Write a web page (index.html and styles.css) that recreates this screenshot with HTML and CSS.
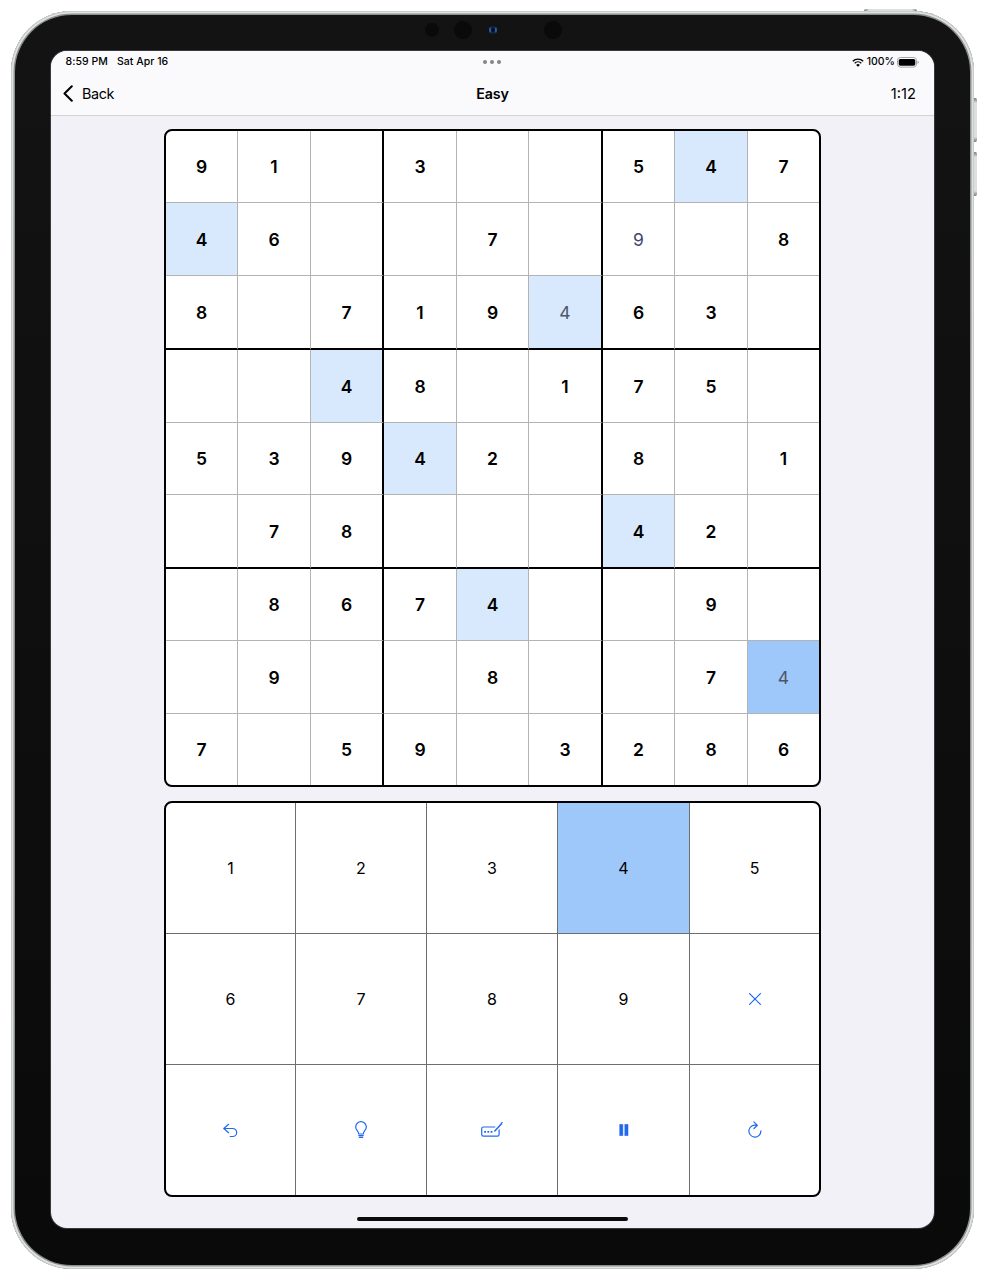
FILE: index.html
```html
<!DOCTYPE html>
<html lang="en">
<head>
<meta charset="utf-8">
<title>Sudoku</title>
<link rel="stylesheet" href="styles.css">
</head>
<body>
<div class="tablet">
  <span class="hw power"></span>
  <span class="hw vol-up"></span>
  <span class="hw vol-down"></span>
  <span class="lens sensor-a"></span>
  <span class="lens sensor-b"></span>
  <span class="camera"></span>
  <span class="lens sensor-c"></span>
  <div class="screen">
    <header class="top">
      <div class="status">
        <div class="status-left"><span>8:59 PM</span><span>Sat Apr 16</span></div>
        <div class="dots"><i></i><i></i><i></i></div>
        <div class="status-right">
          <svg class="wifi" viewBox="0 0 12 9"><path d="M.8 3.3a7.4 7.4 0 0 1 10.4 0M2.7 5.2a4.7 4.7 0 0 1 6.6 0" fill="none" stroke="#000" stroke-width="1.4"/><path d="M6 8.8 4.1 6.9a2.7 2.7 0 0 1 3.8 0z"/></svg>
          <span class="pct">100%</span>
          <svg class="battery" viewBox="0 0 22 11"><rect x=".5" y=".5" width="19" height="9.6" rx="3" fill="#fff" stroke="#a3a3a5"/><rect x="1.7" y="1.9" width="16.6" height="6.8" rx="1.6"/><path d="M20.5 3.8q1.2.4 1.2 1.5t-1.2 1.5z" fill="#a3a3a5"/></svg>
        </div>
      </div>
      <nav class="nav">
        <div class="back"><svg viewBox="0 0 10 17"><path d="M8.8 1.2 1.5 8.5l7.3 7.3" fill="none" stroke="#000" stroke-width="2" stroke-linecap="round" stroke-linejoin="round"/></svg>Back</div>
        <h1>Easy</h1>
        <div class="timer">1:12</div>
      </nav>
    </header>
    <main class="game">
      <div class="board">
        <b>9</b><b>1</b><b></b><b>3</b><b></b><b></b><b>5</b><b class="same">4</b><b>7</b>
        <b class="same">4</b><b>6</b><b></b><b></b><b>7</b><b></b><b class="entry note">9</b><b></b><b>8</b>
        <b>8</b><b></b><b>7</b><b>1</b><b>9</b><b class="same entry">4</b><b>6</b><b>3</b><b></b>
        <b></b><b></b><b class="same">4</b><b>8</b><b></b><b>1</b><b>7</b><b>5</b><b></b>
        <b>5</b><b>3</b><b>9</b><b class="same">4</b><b>2</b><b></b><b>8</b><b></b><b>1</b>
        <b></b><b>7</b><b>8</b><b></b><b></b><b></b><b class="same">4</b><b>2</b><b></b>
        <b></b><b>8</b><b>6</b><b>7</b><b class="same">4</b><b></b><b></b><b>9</b><b></b>
        <b></b><b>9</b><b></b><b></b><b>8</b><b></b><b></b><b>7</b><b class="selected entry">4</b>
        <b>7</b><b></b><b>5</b><b>9</b><b></b><b>3</b><b>2</b><b>8</b><b>6</b>
      </div>
      <div class="keypad">
        <div>1</div><div>2</div><div>3</div><div class="selected">4</div><div>5</div>
        <div>6</div><div>7</div><div>8</div><div>9</div>
        <div><svg width="12" height="12" viewBox="0 0 12 12"><path d="M.6.6l10.8 10.8M11.4.6.6 11.4"/></svg></div>
        <div><svg width="15" height="15" viewBox="0 0 15 15"><path d="M5.6 1.3.8 5.5l4.8 4.2M1 5.5h8.7a4 4 0 0 1 0 8H7.2"/></svg></div>
        <div><svg class="bulb" width="12" height="18" viewBox="0 0 12 18"><path d="M3.7 13C3.7 10 .7 9.3.7 5.9A5.3 5.2 0 0 1 11.3 5.9C11.3 9.3 8.3 10 8.3 13z"/><path d="M3.8 14.6h4.4M4.4 16.4h3.2" stroke-width="1.3"/></svg></div>
        <div><svg class="pad" width="22" height="16" viewBox="0 0 22 16"><path d="M13.8 5H2.3Q.7 5 .7 6.6v6q0 1.600 1.600 1.600h14.200q1.600 0 1.600-1.600V7.800"/><path d="m13.800 9 6.700-7.200" stroke-width="1.500"/><path d="m20.300 1.300.9-.7"/><path d="M3.200 9.800h1.800M6.400 9.800h1.800M9.600 9.800h1.800" stroke-width="1.800" stroke-linecap="butt"/></svg></div>
        <div><svg width="10" height="12" viewBox="0 0 10 12"><path d="M.5.2h3.400v11.600H.5zM5.700.2h3.400v11.600H5.700z" fill="#2069ee" stroke="#2069ee" stroke-width=".3"/></svg></div>
        <div><svg class="reload" width="14" height="17" viewBox="0 0 14 17"><path d="M12.900 9.800A6 6 0 1 1 8.600 4.300M5.900.8 9.400 4.300 6 7.500"/></svg></div>
      </div>
    </main>
    <div class="home"></div>
  </div>
</div>
</body>
</html>
```
FILE: styles.css
```css
* { box-sizing: border-box; }
body {
  margin: 0;
  padding: 11px 11px 0;
  height: 1280px;
  overflow: hidden;
  background: #fff;
  color: #000;
  font-family: Inter, "Liberation Sans", sans-serif;
}
.tablet {
  position: relative;
  width: 963px;
  height: 1258px;
  padding: 40px;
  border-radius: 61px;
  background: linear-gradient(#131313, #0a0a0a);
  box-shadow: inset 0 0 0 1px #c9cccb, inset 0 0 0 2.5px #dfe2e1, inset 0 0 0 4px #8b8f8d;
}
.hw { position: absolute; background: linear-gradient(90deg, #777 0, #dcdfdd 5px, #dcdfdd calc(100% - 5px), #777); }
.power { left: 853px; top: -2px; width: 53px; height: 2px; border-radius: 2px 2px 0 0; }
.vol-up, .vol-down { left: 963px; width: 3px; height: 44px; border-radius: 0 2px 2px 0; background: linear-gradient(#777 0, #dcdfdd 5px, #dcdfdd 39px, #777); }
.vol-up { top: 87px; }
.vol-down { top: 141px; }
.lens { position: absolute; border-radius: 50%; background: #0a0a0a; }
.sensor-a { left: 414px; top: 12px; width: 14px; height: 14px; }
.sensor-b { left: 443px; top: 10px; width: 18px; height: 18px; }
.sensor-c { left: 533px; top: 10px; width: 18px; height: 18px; }
.camera {
  position: absolute; left: 478px; top: 15px; width: 8px; height: 8px;
  border: 2px solid #17233c; border-left-color: #285aa3; border-right-color: #285aa3;
  border-radius: 50%; background: #080d1c;
}
.screen {
  display: flex;
  flex-direction: column;
  align-items: center;
  height: 1177px;
  border-radius: 16px;
  background: #f2f1f7;
  overflow: hidden;
  box-shadow: 0 0 0 1px #3a3a3c;
}
.top { width: 100%; height: 65px; background: #fafafd; border-bottom: 1px solid #d2d1d6; }
.status {
  display: grid;
  grid-template-columns: 1fr auto 1fr;
  align-items: center;
  height: 22px;
  padding: 0 15px 0 14.5px;
  font-size: 10.5px;
  line-height: 22px;
  font-weight: 450;
  letter-spacing: .05px;
}
.status-left { display: flex; gap: 9px; }
.dots { display: flex; gap: 3px; }
.dots i { width: 4px; height: 4px; border-radius: 50%; background: #858587; }
.status-right { display: flex; align-items: center; justify-content: flex-end; }
.wifi { width: 12px; height: 9px; margin-right: 3px; }
.pct { margin-right: 2px; letter-spacing: 0; }
.battery { width: 22px; height: 11px; }
.nav {
  display: grid;
  grid-template-columns: 1fr auto 1fr;
  align-items: center;
  height: 41px;
  padding: 0 18px 0 12px;
  font-size: 14.7px;
}
.nav h1 { margin: 0 0 0 6px; font-size: 14.3px; font-weight: 600; letter-spacing: -.15px; }
.back { display: flex; align-items: center; gap: 9px; font-size: 14.4px; letter-spacing: -.4px; }
.back svg { width: 10px; height: 17px; }
.timer { text-align: right; }
.game { display: flex; flex-direction: column; gap: 14px; padding-top: 13px; }
.board, .keypad {
  display: grid;
  width: 657px;
  border: 2px solid #000;
  border-radius: 8px;
  background: #fff;
  overflow: hidden;
}
.board {
  grid-template-columns: 72px 73px 73px 73px 72px 74px 72px 73px 71px;
  grid-template-rows: 72px 73px 74px 73px 72px 74px 72px 73px 71px;
}
.board b {
  display: flex;
  align-items: center;
  justify-content: center;
  border: 0 solid #b3b3b3;
  border-width: 0 1px 1px 0;
  font-size: 17.5px;
  font-weight: 570;
}
.board b:nth-child(9n+3), .board b:nth-child(9n+6) { border-right: 2px solid #000; }
.board b:nth-child(9n) { border-right: 0; }
.board b:nth-child(n+19):nth-child(-n+27), .board b:nth-child(n+46):nth-child(-n+54) { border-bottom: 2px solid #000; }
.board b:nth-child(n+73) { border-bottom: 0; }
.board .same { background: #d8e9fd; }
.board .entry { font-weight: 400; color: #4e5666; }
.board .note { color: #45456f; }
.board .selected, .keypad .selected { background: #9fc8fa; }
.keypad {
  grid-template-columns: 130px 131px 131px 132px 129px;
  grid-template-rows: 131px 131px 130px;
}
.keypad div {
  display: flex;
  align-items: center;
  justify-content: center;
  border: 0 solid #6e6e6e;
  border-width: 0 1px 1px 0;
  font-size: 16px;
}
.keypad div:nth-child(5n) { border-right: 0; }
.keypad div:nth-child(n+11) { border-bottom: 0; }
.keypad svg { fill: none; stroke: #2069ee; stroke-width: 1.2; stroke-linecap: round; stroke-linejoin: round; }
.keypad .reload { margin-bottom: 1px; }
.home { width: 271px; height: 4.5px; margin-top: 19.5px; border-radius: 3px; background: #0b0b0c; }
```
